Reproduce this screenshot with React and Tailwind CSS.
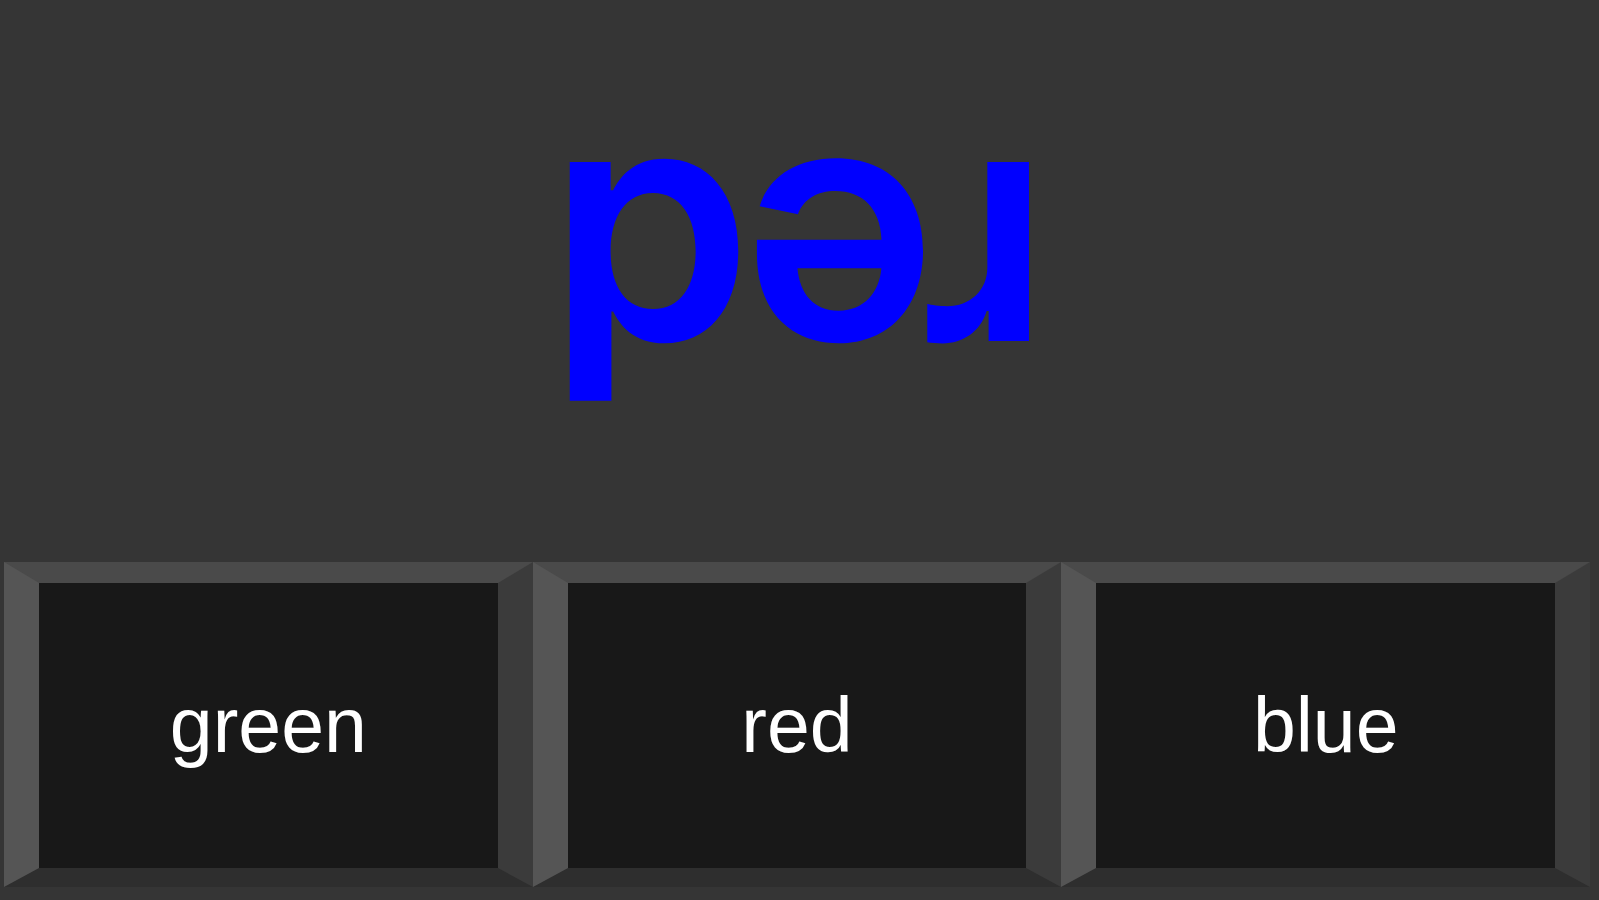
import React from 'react';

const choices = ['green', 'red', 'blue'];

const App = () => {
  return (
    <div
      className="h-screen w-full bg-[#353535] flex flex-col overflow-hidden"
      style={{ fontFamily: '"Liberation Sans", Arial, sans-serif' }}
    >
      {/* Prompt word, shown upside down */}
      <div className="h-[562px] pl-[10px] flex items-center justify-center">
        <div
          className="rotate-180 text-[#0000ff] text-[328px] font-semibold tracking-[-0.028em] leading-none select-none"
          style={{ fontFamily: 'Inter, "Liberation Sans", sans-serif' }}
        >
          red
        </div>
      </div>

      {/* Answer buttons */}
      <div className="h-[325px] flex pl-[4px] pr-[9px]">
        {choices.map((c) => (
          <button
            key={c}
            className="flex-1 flex items-center justify-center bg-[#181818] text-white text-[77px] border-solid border-t-[21px] border-b-[19px] border-x-[35px] border-t-[#4a4a4a] border-l-[#555555] border-r-[#3b3b3b] border-b-[#2e2e2e]"
          >
            {c}
          </button>
        ))}
      </div>
    </div>
  );
};

export default App;
